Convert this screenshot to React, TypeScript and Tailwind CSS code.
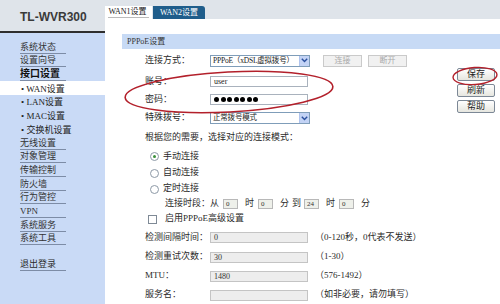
import React from 'react';

type MenuItem = { label: string; bold?: boolean; sub?: boolean; active?: boolean };

const menu: MenuItem[] = [
  { label: '系统状态' },
  { label: '设置向导' },
  { label: '接口设置', bold: true },
  { label: 'WAN设置', sub: true, active: true },
  { label: 'LAN设置', sub: true },
  { label: 'MAC设置', sub: true },
  { label: '交换机设置', sub: true },
  { label: '无线设置' },
  { label: '对象管理' },
  { label: '传输控制' },
  { label: '防火墙' },
  { label: '行为管控' },
  { label: 'VPN' },
  { label: '系统服务' },
  { label: '系统工具' },
];

const Chevron = () => (
  <svg width="7" height="5" viewBox="0 0 7 5">
    <path d="M0.8 0.8 L3.5 3.6 L6.2 0.8" fill="none" stroke="#2a4f9e" strokeWidth="1.4" />
  </svg>
);

const Select: React.FC<{ value: string }> = ({ value }) => (
  <div className="w-[100px] h-[12px] border border-[#7f9db9] bg-white flex items-stretch">
    <span className="flex-1 pl-[2px] leading-[10px] text-[7.5px] tracking-[-0.2px] text-[#222] whitespace-nowrap overflow-hidden">{value}</span>
    <span className="w-[10px] bg-[#c3d3f5] border-l border-[#b0c4ee] flex items-center justify-center">
      <Chevron />
    </span>
  </div>
);

const Field: React.FC<{ value?: string; gray?: boolean }> = ({ value = '', gray }) => (
  <div
    className={`w-[98px] h-[11px] border pl-[3px] text-[8px] leading-[9px] ${
      gray ? 'bg-[#ededed] border-[#c4c4c4] text-[#333]' : 'bg-white border-[#a9b2bd] text-[#222]'
    }`}
  >
    {value}
  </div>
);

const TimeBox: React.FC<{ value: string }> = ({ value }) => (
  <div className="w-[15px] h-[10px] bg-[#eef0ea] border border-[#b8b8b8] pl-[2px] text-[7px] leading-[8px] text-[#333]">
    {value}
  </div>
);

const Radio: React.FC<{ checked?: boolean; label: string }> = ({ checked, label }) => (
  <div className="flex items-center h-full pl-[5px]">
    <span className="w-[9px] h-[9px] rounded-full border border-[#8d99a6] bg-white flex items-center justify-center">
      {checked && <span className="w-[3px] h-[3px] rounded-full bg-[#3a8f3a]" />}
    </span>
    <span className="ml-[4px]">{label}</span>
  </div>
);

const SideButton: React.FC<{ label: string }> = ({ label }) => (
  <button className="w-[38px] h-[13px] border border-[#7c8896] rounded-[2px] bg-gradient-to-b from-white to-[#e6e6df] text-[9px] leading-[11px] text-[#222]">
    {label}
  </button>
);

export default function App() {
  return (
    <div className="relative w-[500px] h-[304px] overflow-hidden flex bg-white text-[9px] text-[#2a2a2a] font-['Liberation_Serif','Noto_Sans_CJK_SC',serif]">
      {/* sidebar */}
      <aside className="w-[105px] flex flex-col shrink-0">
        <div className="h-[31px] bg-[#dfe4ea] flex items-center pl-[20px] pt-[3px] font-['Liberation_Sans',sans-serif] font-bold text-[12px] text-[#3a3a3a]">
          TL-WVR300
        </div>
        <div className="h-[2px] bg-[#2e2e2e]" />
        <nav className="flex-1 bg-[#c9daf6] pt-[7px]">
          {menu.map((m) => (
            <div key={m.label} className={`h-[13.7px] flex items-end ${m.active ? 'bg-white' : ''}`}>
              {m.sub ? (
                <span className="ml-[21px] leading-[12px] text-[#222] whitespace-nowrap">• {m.label}</span>
              ) : (
                <span
                  className={`ml-[20px] w-[46px] leading-[12px] border-b border-[#7d8ca6] whitespace-nowrap ${
                    m.bold ? 'font-bold text-[10px] text-[#111]' : 'text-[#333]'
                  }`}
                >
                  {m.label}
                </span>
              )}
            </div>
          ))}
          <div className="h-[13.7px] mt-[12px] flex items-end">
            <span className="ml-[20px] w-[46px] leading-[12px] border-b border-[#7d8ca6]">退出登录</span>
          </div>
        </nav>
      </aside>

      {/* content */}
      <main className="flex-1 flex flex-col">
        <div className="h-[21px] bg-[#dfe4ea] flex items-end">
          <div className="w-[47px] h-[13px] bg-white flex items-start justify-center">
            <span className="text-[8px] leading-[11px] text-[#222] border-b border-[#bbbbbb] pr-[2px]">WAN1设置</span>
          </div>
          <div className="ml-[1px] w-[52px] h-[13px] bg-[#1f5d8b] rounded-tr-[3px] flex items-center justify-center text-[8px] text-white">
            WAN2设置
          </div>
        </div>

        <div className="flex-1 pl-[17px] pt-[15px]">
          <div className="h-[15px] bg-[#c7daf5] pl-[5px] flex items-center text-[8px] text-[#333]">PPPoE设置</div>

          <div className="flex">
            <div className="flex-1 pl-[23px]">
              <div className="h-[23px] flex items-center">
                <span className="w-[65px]">连接方式：</span>
                <Select value="PPPoE（xDSL虚拟拨号）" />
                <button className="ml-[13px] w-[39px] h-[12px] bg-[#f1f1f1] border border-[#cacaca] text-[8px] leading-[10px] text-[#a9a9a9]">
                  连接
                </button>
                <button className="ml-[6px] w-[39px] h-[12px] bg-[#f1f1f1] border border-[#cacaca] text-[8px] leading-[10px] text-[#a9a9a9]">
                  断开
                </button>
              </div>
              <div className="h-[19px] flex items-center">
                <span className="w-[65px]">账号：</span>
                <Field value="user" />
              </div>
              <div className="h-[17px] flex items-center">
                <span className="w-[65px]">密码：</span>
                <div className="w-[98px] h-[11px] border border-[#a9b2bd] bg-white pl-[3px] flex items-center gap-[1.5px]">
                  {[0, 1, 2, 3, 4, 5, 6].map((i) => (
                    <span key={i} className="w-[5px] h-[5px] rounded-full bg-black" />
                  ))}
                </div>
              </div>
              <div className="h-[20px] flex items-center">
                <span className="w-[65px]">特殊拨号：</span>
                <Select value="正常拨号模式" />
              </div>
              <div className="h-[20px] flex items-center">根据您的需要，选择对应的连接模式：</div>
              <div className="h-[17px]">
                <Radio checked label="手动连接" />
              </div>
              <div className="h-[16px]">
                <Radio label="自动连接" />
              </div>
              <div className="h-[16px]">
                <Radio label="定时连接" />
              </div>
              <div className="h-[14px] flex items-center pl-[20px] whitespace-nowrap">
                <span className="w-[45px]">连接时段：</span>
                <span>从</span>
                <span className="ml-[4px]"><TimeBox value="0" /></span>
                <span className="ml-[7px]">时</span>
                <span className="ml-[4px]"><TimeBox value="0" /></span>
                <span className="ml-[7px]">分</span>
                <span className="ml-[3px]">到</span>
                <span className="ml-[3px]"><TimeBox value="24" /></span>
                <span className="ml-[7px]">时</span>
                <span className="ml-[4px]"><TimeBox value="0" /></span>
                <span className="ml-[7px]">分</span>
              </div>
              <div className="h-[16px] flex items-center pl-[3px]">
                <span className="w-[9px] h-[9px] border border-[#7f8a96] bg-white" />
                <span className="ml-[8px]">启用PPPoE高级设置</span>
              </div>
              <div className="h-[21px] flex items-center">
                <span className="w-[65px]">检测间隔时间：</span>
                <Field gray value="0" />
                <span className="ml-[7px] whitespace-nowrap">（0-120秒，0代表不发送）</span>
              </div>
              <div className="h-[18px] flex items-center">
                <span className="w-[65px]">检测重试次数：</span>
                <Field gray value="30" />
                <span className="ml-[7px]">（1-30）</span>
              </div>
              <div className="h-[20px] flex items-center">
                <span className="w-[65px]">MTU：</span>
                <Field gray value="1480" />
                <span className="ml-[7px]">（576-1492）</span>
              </div>
              <div className="h-[18px] flex items-center">
                <span className="w-[65px]">服务名：</span>
                <Field gray />
                <span className="ml-[7px] whitespace-nowrap">（如非必要，请勿填写）</span>
              </div>
            </div>

            <div className="w-[43px] pt-[19px] flex flex-col gap-[3px]">
              <SideButton label="保存" />
              <SideButton label="刷新" />
              <SideButton label="帮助" />
            </div>
          </div>
        </div>
      </main>

      {/* red hand-drawn marks over the page */}
      <svg className="absolute inset-0 pointer-events-none" width="500" height="304">
        <ellipse cx="229" cy="92" rx="104" ry="20" transform="rotate(-3 229 92)" fill="none" stroke="#b3202b" strokeWidth="1.6" />
        <ellipse cx="475" cy="76" rx="22" ry="8.5" transform="rotate(-4 475 76)" fill="none" stroke="#b3202b" strokeWidth="1.4" />
      </svg>
    </div>
  );
}
